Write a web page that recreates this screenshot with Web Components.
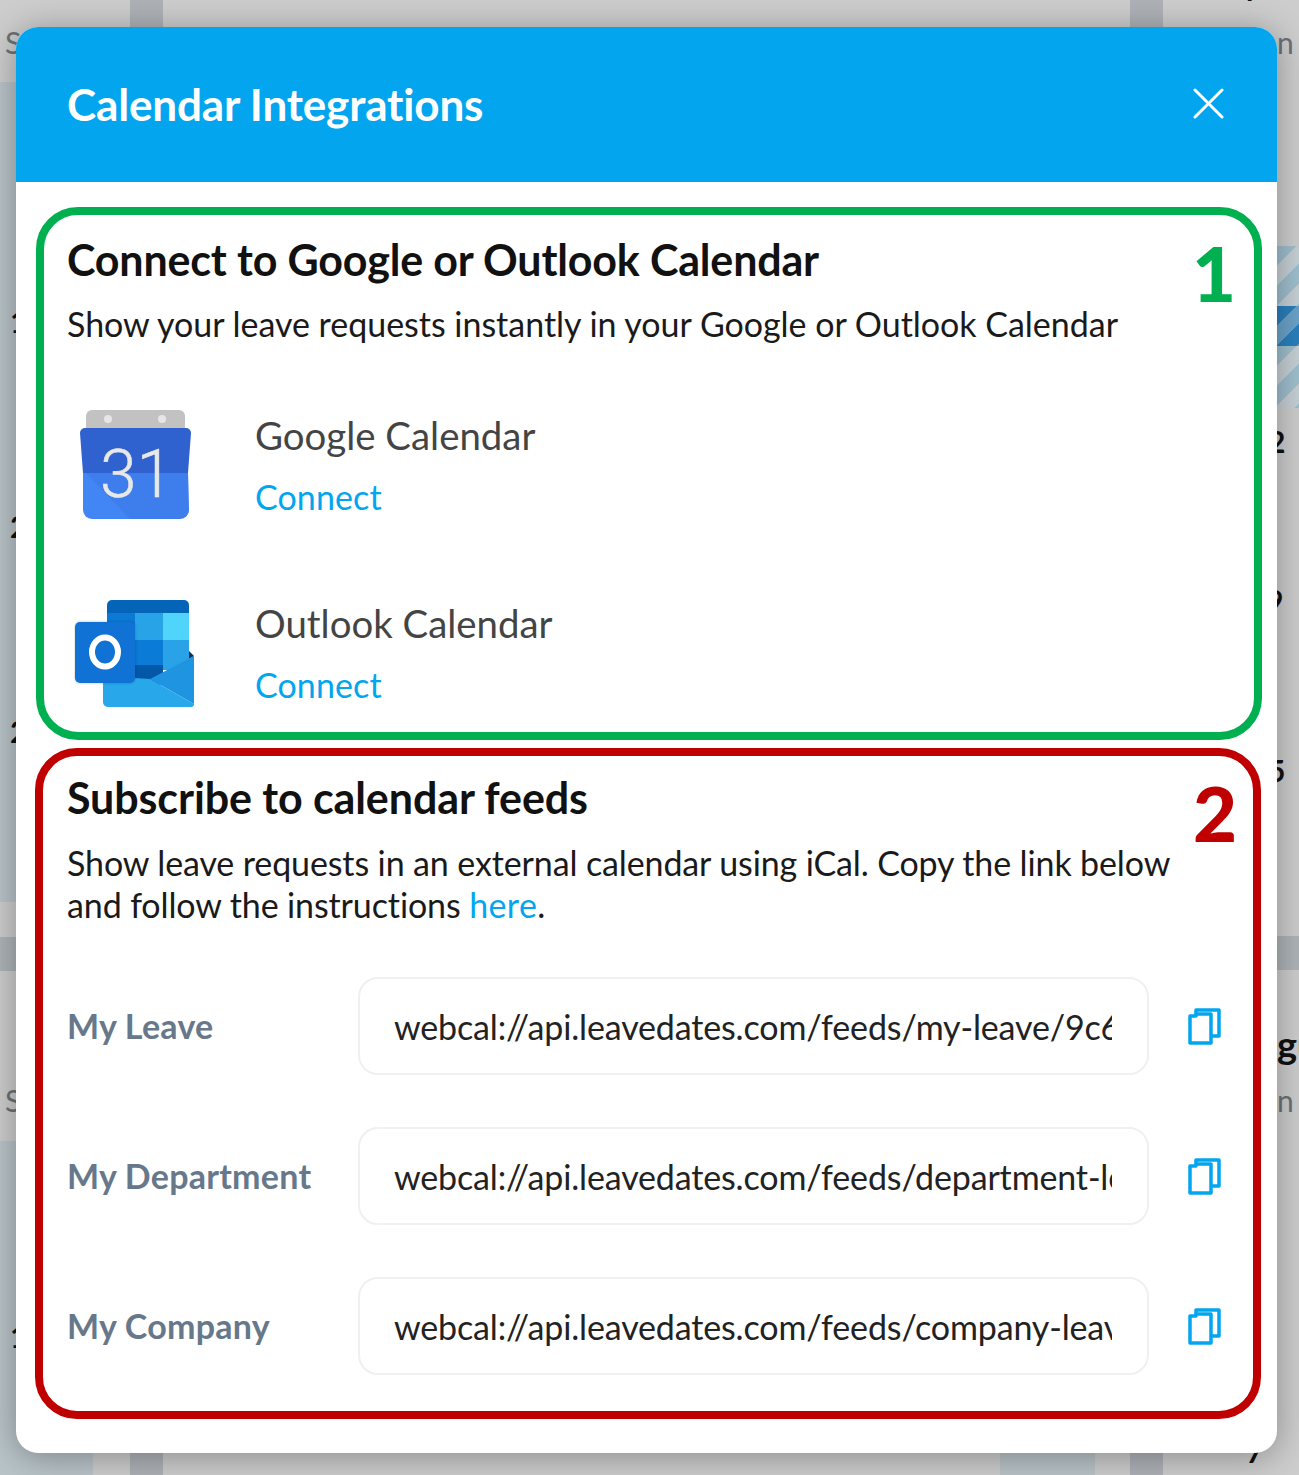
<!DOCTYPE html>
<html><head><meta charset="utf-8"><style>
html,body{margin:0;padding:0;background:#ccc}
body{width:1299px;height:1475px;overflow:hidden;position:relative;font-family:Lato,sans-serif}
</style></head><body>
<page-backdrop></page-backdrop>
<modal-dialog heading="Calendar Integrations">
  <note-box tone="#00b050" num="1" style="--mb:8px;--h:533px;--ml:20px;--mr:15px;--pl:23px;--pt:15px;--pm:13px;--ls:-.02px;--hls:-.17px;--nr:18px;--nt:20px">
    <section-head heading="Connect to Google or Outlook Calendar">Show your leave requests instantly in your Google or Outlook Calendar</section-head>
    <provider-row name="Google Calendar" style="margin-top:61px">
      <svg slot="icon" width="122" height="112" viewBox="74 410 122 112">
        <path d="M86 416a6 6 0 0 1 6-6h87a6 6 0 0 1 6 6v20H86z" fill="#c2c2c2"/>
        <circle cx="108" cy="419" r="4" fill="#e6e6e6"/><circle cx="162" cy="419" r="4" fill="#e6e6e6"/>
        <path d="M85 428h101a5 5 0 0 1 5 5l-3 40H83l-3-40a5 5 0 0 1 5-5z" fill="#2f62cf"/>
        <path d="M83 473h105l1 37a9 9 0 0 1-9 9H92a9 9 0 0 1-9-9z" fill="#4285f4"/>
        <path d="M86 473h102l1 37a9 9 0 0 1-9 9h-50z" fill="#3a74e3" opacity=".45"/>
        <text x="136.500" y="497" text-anchor="middle" font-family="Roboto,sans-serif" font-weight="300" font-size="66" stroke="#e8e8e8" stroke-width=".5" fill="#e8e8e8">31</text>
      </svg>
    </provider-row>
    <provider-row name="Outlook Calendar" style="margin-top:68px">
      <svg slot="icon" width="122" height="112" viewBox="74 598 122 112">
        <defs><filter id="b" x="-20%" y="-20%" width="140%" height="140%"><feGaussianBlur stdDeviation="1.500"/></filter></defs>
        <path d="M105 706h87v-4h-87z" fill="#000" opacity=".2" filter="url(#b)"/>
        <path d="M107 605a5 5 0 0 1 5-5h72a5 5 0 0 1 5 5v8h-82z" fill="#0364b8"/>
        <rect x="107" y="613" width="28" height="27" fill="#0b7ad4"/>
        <rect x="135" y="613" width="28" height="27" fill="#28a3e8"/>
        <rect x="163" y="613" width="26" height="27" fill="#50d4fc"/>
        <rect x="107" y="640" width="28" height="42" fill="#0a62b4"/>
        <rect x="135" y="640" width="28" height="30" fill="#0a7bd6"/>
        <rect x="163" y="640" width="26" height="30" fill="#2aa2e8"/>
        <path d="M135 665h28v20h-28z" fill="#0358a7"/>
        <path d="M189 651l5 5-5 3z" fill="#07305e"/>
        <path d="M150 679l44-23v48z" fill="#1f94e0"/>
        <path d="M103 676l47 3 44 25a3 3 0 0 1-3 3H108a5 5 0 0 1-5-5z" fill="#28a8ea"/>
        <rect x="75" y="622" width="60" height="61" rx="5" fill="#000" opacity=".25" filter="url(#b)"/>
        <rect x="75" y="622" width="60" height="61" rx="5" fill="#1172d6"/>
        <ellipse cx="105" cy="652" rx="13" ry="14.500" fill="none" stroke="#fff" stroke-width="6"/>
      </svg>
    </provider-row>
  </note-box>
  <note-box tone="#c00000" num="2" style="--mb:0;--h:671px;--ml:19px;--mr:16px;--pl:24px;--pt:12px;--pm:14px;--ls:-.12px;--hls:-.1px;--nr:16px;--nt:19px">
    <section-head heading="Subscribe to calendar feeds">Show leave requests in an external calendar using iCal. Copy the link below<br>and follow the instructions <a>here</a>.</section-head>
    <feed-row label="My Leave" style="margin-top:51px">webcal://api.leavedates.com/feeds/my-leave/9c6e41b07d2f4a8c</feed-row>
    <feed-row label="My Department" style="margin-top:52px">webcal://api.leavedates.com/feeds/department-leave/9c6e41b07d2f</feed-row>
    <feed-row label="My Company" style="margin-top:52px">webcal://api.leavedates.com/feeds/company-leave/9c6e41b07d2f4a</feed-row>
  </note-box>
</modal-dialog>
<script>
function def(name, html, init){
  customElements.define(name, class extends HTMLElement{
    constructor(){super();const r=this.attachShadow({mode:'open'});r.innerHTML=html;}
    connectedCallback(){ if(init) init(this, this.shadowRoot); }
  });
}
def('page-backdrop',`<style>
:host{position:absolute;inset:0;display:block;overflow:hidden;background:#cdcdcd;font-family:Lato,sans-serif;color:#6b7278;font-size:30px}
.c{position:absolute;top:0;bottom:0;background:#aeb2b7}
.b{position:absolute;background:#b9c4c9}
.t{position:absolute;line-height:1;white-space:pre}
.d{color:#111;font-weight:700}
.s{position:absolute;left:1277px;width:22px;background:repeating-linear-gradient(135deg,#9fbfce 0 14px,#c5d0d5 14px 28px)}
</style>
<div class="b" style="left:0;top:82px;width:16px;height:820px"></div>
<div class="b" style="left:0;top:937px;width:16px;height:34px;background:#aeb4b8"></div>
<div class="b" style="left:0;top:1141px;width:93px;height:334px"></div>
<div class="b" style="left:1000px;top:1453px;width:95px;height:22px"></div>
<div class="c" style="left:130px;width:33px"></div>
<div class="c" style="left:1130px;width:33px"></div>
<div class="s" style="top:246px;height:60px"></div>
<div class="s" style="top:306px;height:40px;background:repeating-linear-gradient(135deg,#2a80bd 0 14px,#6ba3c9 14px 28px)"></div>
<div class="s" style="top:346px;height:62px"></div>
<div class="b" style="left:1277px;top:936px;width:22px;height:34px;background:#aeb4b8"></div>
<span class="t" style="left:5px;top:27px">S</span>
<span class="t" style="left:5px;top:1085px">S</span>
<span class="t" style="left:1277px;top:27px">n</span>
<span class="t" style="left:1277px;top:1085px">n</span>
<span class="t d" style="left:1277px;top:1025px;font-size:38px">gu</span>
<span class="t d" style="left:10px;top:306px">1</span>
<span class="t d" style="left:10px;top:511px">2</span>
<span class="t d" style="left:10px;top:716px">2</span>
<span class="t d" style="left:10px;top:1321px">1</span>
<span class="t d" style="left:1268px;top:426px">2</span>
<span class="t d" style="left:1266px;top:585px">9</span>
<span class="t d" style="left:1268px;top:755px">5</span>
<span class="t d" style="left:1246px;top:-31px">p</span>
<span class="t d" style="left:1246px;top:1436px">7</span>`);
def('modal-dialog',`<style>
:host{display:block;position:relative;box-sizing:border-box;margin:27px 22px 0 16px;width:1261px;height:1426px;background:#fff;border-radius:22px;box-shadow:0 4px 34px rgba(0,0,0,.33);overflow:hidden;color:#111}
header{height:155px;box-sizing:border-box;background:#03a6ee;color:#fff;display:flex;align-items:center;justify-content:space-between;padding:0 53px 2px 51px}
h1{margin:0;font:700 44px/1 Lato,sans-serif;letter-spacing:-.15px}
svg{display:block}
main{display:block;padding-top:25px}
</style><header><h1></h1><svg width="31" height="31" viewBox="0 0 31 31"><path d="M2 2l27 27M29 2L2 29" stroke="#fff" stroke-width="3" stroke-linecap="round"/></svg></header><main><slot></slot></main>`,
(h,r)=>{r.querySelector('h1').textContent=h.getAttribute('heading')});
def('note-box',`<style>
:host{display:block;position:relative;box-sizing:border-box;height:var(--h);margin:0 var(--mr) var(--mb) var(--ml);border:8px solid var(--tone);border-radius:42px;padding:0 0 0 var(--pl)}
.n{position:absolute;right:var(--nr);top:var(--nt);font:900 76px/1 Lato,sans-serif;color:var(--tone)}
</style><span class="n"></span><slot></slot>`,
(h,r)=>{h.style.setProperty('--tone',h.getAttribute('tone'));r.querySelector('.n').textContent=h.getAttribute('num')});
def('section-head',`<style>
:host{display:block}
h2{margin:0;padding-top:var(--pt);font:700 43px/60px Lato,sans-serif;letter-spacing:var(--hls);color:#111}
p{margin:var(--pm) 0 0;font:400 34px/42px Lato,sans-serif;letter-spacing:var(--ls);color:#1a1a1a}
::slotted(a){color:#03a6ee;letter-spacing:.4px}
</style><h2></h2><p><slot></slot></p>`,
(h,r)=>{r.querySelector('h2').textContent=h.getAttribute('heading')});
def('provider-row',`<style>
:host{display:flex;align-items:center;height:120px;margin-left:-7px}
.i{width:181px;padding-left:14px;flex:none;display:flex}
.name{font:400 38.400px/1 Lato,sans-serif;color:#444;margin-bottom:26px}
.c{font:400 34px/1 Lato,sans-serif;color:#03a6ee;letter-spacing:.1px}
.w{display:flex;flex-direction:column;padding-bottom:2px}
</style><div class="i"><slot name="icon"></slot></div><div class="w"><div class="name"></div><div class="c">Connect</div></div>`,
(h,r)=>{r.querySelector('.name').textContent=h.getAttribute('name')});
def('feed-row',`<style>
:host{display:flex;align-items:center;height:98px}
label{width:291px;flex:none;font:700 34px/1 Lato,sans-serif;letter-spacing:.25px;color:#66788a}
.f{box-sizing:border-box;width:791px;height:98px;border:2px solid #f0f0f0;border-radius:20px;padding:1px 35px 0 34px;display:flex;align-items:center;flex:none}
.v{overflow:hidden;white-space:nowrap;width:100%;font:400 34px/44px Lato,sans-serif;letter-spacing:-.15px;color:#222}
svg{display:block;margin-left:39px;flex:none}
</style><label></label><div class="f"><div class="v"><slot></slot></div></div>
<svg width="33" height="37" viewBox="0 0 33 37" fill="none" stroke="#03a6ee" stroke-width="3.500" stroke-linejoin="round"><path d="M8 6V2h23v26h-8"/><path d="M8 6h15v29H2V8h6z"/></svg>`,
(h,r)=>{r.querySelector('label').textContent=h.getAttribute('label')});
</script>
</body></html>
